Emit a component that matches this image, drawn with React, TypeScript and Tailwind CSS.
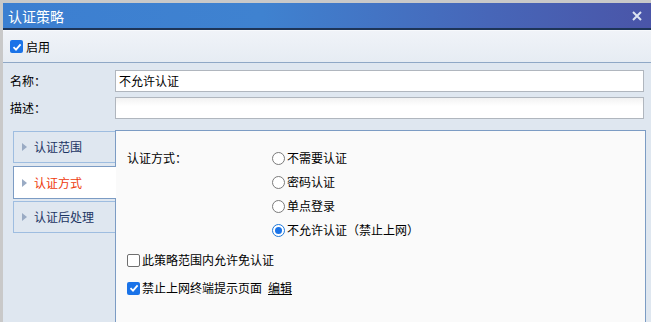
import React from "react";

const font = { fontFamily: '"Noto Sans CJK SC", "Noto Sans", sans-serif' };

function Radio({ checked }: { checked?: boolean }) {
  return checked ? (
    <span className="w-[13px] h-[13px] rounded-full border border-[#1e78d8] bg-white flex items-center justify-center">
      <span className="w-[7px] h-[7px] rounded-full bg-[#1a73e8]" />
    </span>
  ) : (
    <span className="w-[13px] h-[13px] rounded-full border border-[#7a7a7a] bg-white" />
  );
}

function Check({ checked }: { checked?: boolean }) {
  return checked ? (
    <span className="w-[13px] h-[13px] rounded-[2px] bg-[#1a73e8] flex items-center justify-center">
      <svg width="10" height="10" viewBox="0 0 10 10">
        <path d="M1.5 5.2 L4 7.6 L8.6 2.4" stroke="white" strokeWidth="1.8" fill="none" />
      </svg>
    </span>
  ) : (
    <span className="w-[13px] h-[13px] rounded-[2px] border border-[#6f6f6f] bg-white" />
  );
}

function Arrow() {
  return (
    <svg width="5" height="8" viewBox="0 0 5 8" className="mr-[7px]">
      <path d="M0 0 L5 4 L0 8 Z" fill="#9aabc4" />
    </svg>
  );
}

export default function App() {
  return (
    <div className="w-[651px] h-[322px] bg-[#c9c9c9] overflow-hidden pt-[3px] pl-[3px] text-[12px] text-black" style={font}>
      <div className="w-[648px] h-[330px] flex flex-col bg-[#dfe7f0]">
        <div className="h-[27px] flex items-center justify-between pl-[5px] pr-[9px] bg-[linear-gradient(90deg,#3c7fd1_0%,#3f82d0_40%,#4766b8_75%,#4a55a8_100%)] border-b-2 border-[#1e3558]">
          <span className="text-white text-[14px] leading-none">认证策略</span>
          <svg width="10" height="10" viewBox="0 0 10 10">
            <path d="M1 1 L9 9 M9 1 L1 9" stroke="#dde4f2" strokeWidth="2" />
          </svg>
        </div>
        <div className="h-[33px] flex items-center pl-[7px] bg-[linear-gradient(180deg,#f0f3f8,#e6ecf3)] border-t border-[#f7f9fc] border-b border-b-[#8fa8c6]">
          <Check checked />
          <span className="ml-[3px]">启用</span>
        </div>
        <div className="flex flex-col pt-[7px]">
          <div className="flex items-center h-[22px]">
            <span className="w-[112px] pl-[7px]">名称：</span>
            <div className="w-[529px] h-[22px] border border-[#b0b6be] bg-white flex items-center pl-[3px]">不允许认证</div>
          </div>
          <div className="flex items-center h-[22px] mt-[5px]">
            <span className="w-[112px] pl-[7px]">描述：</span>
            <div className="w-[529px] h-[22px] border border-[#b0b6be] bg-[linear-gradient(180deg,#f2f2f2,#ffffff_40%)]" />
          </div>
        </div>
        <div className="flex flex-1 mt-[11px] pl-[10px]">
          <div className="w-[102px] flex flex-col pt-[1px]">
            <div className="h-[32px] border border-[#9ebde0] border-r-0 flex items-center pl-[8px] text-[#1c3563]">
              <Arrow />认证范围
            </div>
            <div className="h-[33px] mt-[3px] border border-[#7c9cc4] border-r-0 bg-white flex items-center pl-[8px] text-[#ee3a0c] relative z-10 mr-[-1px]">
              <Arrow />认证方式
            </div>
            <div className="h-[32px] mt-[2px] border border-[#9ebde0] border-r-0 flex items-center pl-[8px] text-[#1c3563]">
              <Arrow />认证后处理
            </div>
          </div>
          <div className="w-[531px] h-[200px] border border-[#7c9cc4] bg-[#fafafa] pl-[11px] pt-[18px]">
            <div className="flex">
              <span className="w-[145px] leading-[18px]">认证方式：</span>
              <div className="flex flex-col gap-[6px]">
                {["不需要认证", "密码认证", "单点登录", "不允许认证（禁止上网）"].map((t, i) => (
                  <div key={t} className="flex items-center h-[18px]">
                    <Radio checked={i === 3} />
                    <span className="ml-[2px]">{t}</span>
                  </div>
                ))}
              </div>
            </div>
            <div className="flex items-center mt-[12px] h-[18px]">
              <Check />
              <span className="ml-[2px]">此策略范围内允许免认证</span>
            </div>
            <div className="flex items-center mt-[10px] h-[18px]">
              <Check checked />
              <span className="ml-[2px]">禁止上网终端提示页面</span>
              <span className="ml-[6px] underline">编辑</span>
            </div>
          </div>
        </div>
      </div>
    </div>
  );
}
